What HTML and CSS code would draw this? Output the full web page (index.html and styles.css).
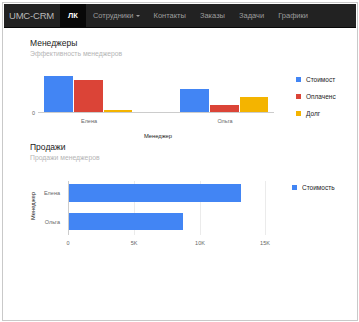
FILE: index.html
```html
<!DOCTYPE html>
<html lang="ru">
<head>
    <meta charset="UTF-8">
    <meta name="viewport" content="width=device-width, initial-scale=1.0">
    <title>UMC-CRM</title>
    <link rel="stylesheet" href="styles.css">
</head>
<body>
    <div class="frame">
        <nav class="navbar">
            <a class="brand">UMC-CRM</a>
            <ul class="nav">
                <li class="nav-item active">ЛК</li>
                <li class="nav-item">Сотрудники<span class="caret"></span></li>
                <li class="nav-item">Контакты</li>
                <li class="nav-item">Заказы</li>
                <li class="nav-item">Задачи</li>
                <li class="nav-item">Графики</li>
            </ul>
        </nav>

        <div class="content">
            <div class="chart-section">
                <div class="chart-title">Менеджеры</div>
                <div class="chart-subtitle">Эффективность менеджеров</div>
                <svg class="chart chart-bars" width="351" height="84" viewBox="0 0 351 84">
                    <!-- Елена -->
                    <rect x="40" y="18" width="29" height="36" fill="#4285f4"/>
                    <rect x="70" y="22" width="29" height="32" fill="#db4437"/>
                    <rect x="100" y="52" width="28" height="2" fill="#f4b400"/>
                    <!-- Ольга -->
                    <rect x="176" y="31" width="29" height="23" fill="#4285f4"/>
                    <rect x="206" y="47" width="29" height="7" fill="#db4437"/>
                    <rect x="236" y="39" width="28" height="15" fill="#f4b400"/>

                    <line x1="34" y1="54.5" x2="270" y2="54.5" stroke="#ccc" stroke-width="1"/>
                    <text class="axis-label" x="31" y="56.5" text-anchor="end">0</text>
                    <text class="axis-label" x="85" y="64.5" text-anchor="middle">Елена</text>
                    <text class="axis-label" x="221" y="64.5" text-anchor="middle">Ольга</text>
                    <text class="axis-title" x="154" y="80" text-anchor="middle">Менеджер</text>

                    <rect x="292" y="19" width="5" height="5" fill="#4285f4"/>
                    <text class="legend" x="302" y="24">Стоимост</text>
                    <rect x="292" y="36" width="5" height="5" fill="#db4437"/>
                    <text class="legend" x="302" y="41">Оплаченс</text>
                    <rect x="292" y="53" width="5" height="5" fill="#f4b400"/>
                    <text class="legend" x="302" y="58">Долг</text>
                </svg>
            </div>

            <div class="chart-section">
                <div class="chart-title">Продажи</div>
                <div class="chart-subtitle">Продажи менеджеров</div>
                <svg class="chart chart-hbars" width="351" height="86" viewBox="0 0 351 86">
                    <line x1="130.5" y1="16" x2="130.5" y2="70" stroke="#ebebeb"/>
                    <line x1="196.5" y1="16" x2="196.5" y2="70" stroke="#ebebeb"/>
                    <line x1="261.5" y1="16" x2="261.5" y2="70" stroke="#ebebeb"/>

                    <rect x="64" y="19" width="173" height="18" fill="#4285f4"/>
                    <rect x="64" y="48" width="115" height="17" fill="#4285f4"/>
                    <line x1="64.5" y1="16" x2="64.5" y2="70" stroke="#ccc"/>

                    <text class="axis-label" x="56" y="30" text-anchor="end">Елена</text>
                    <text class="axis-label" x="56" y="58.5" text-anchor="end">Ольга</text>
                    <text class="axis-title" x="33" y="43" text-anchor="middle" transform="rotate(-90 31 43)">Менеджер</text>

                    <text class="axis-label" x="64" y="80" text-anchor="middle">0</text>
                    <text class="axis-label" x="130" y="80" text-anchor="middle">5K</text>
                    <text class="axis-label" x="196" y="80" text-anchor="middle">10K</text>
                    <text class="axis-label" x="261" y="80" text-anchor="middle">15K</text>

                    <rect x="288" y="20" width="5" height="5" fill="#4285f4"/>
                    <text class="legend" x="298" y="25">Стоимость</text>
                </svg>
            </div>
        </div>
    </div>
</body>
</html>
```

FILE: styles.css
```css
* {
    margin: 0;
    padding: 0;
    box-sizing: border-box;
    font-family: 'Liberation Sans', Arial, sans-serif;
}

body {
    background-color: #fff;
    padding: 2px;
}

.frame {
    width: 356px;
    height: 319px;
    border: 1px solid #c9c9c9;
    padding: 1px;
    background-color: #fff;
}

.navbar {
    display: flex;
    align-items: stretch;
    height: 24px;
    background-color: #222;
    border-bottom: 1px solid #080808;
}

.brand {
    display: flex;
    align-items: center;
    padding: 0 6px 0 5px;
    font-size: 9.5px;
    color: #b8b8b8;
    letter-spacing: -0.2px;
}

.nav {
    display: flex;
    list-style-type: none;
}

.nav-item {
    display: flex;
    align-items: center;
    padding: 0 7px;
    font-size: 7.5px;
    color: #9d9d9d;
}

.nav-item.active {
    background-color: #080808;
    color: #fff;
    font-weight: bold;
    padding: 0 8px;
}

.caret {
    display: inline-block;
    width: 0;
    height: 0;
    margin-left: 2px;
    border-top: 2.5px solid #9d9d9d;
    border-left: 2px solid transparent;
    border-right: 2px solid transparent;
}

.content {
    padding-top: 10px;
}

.chart-section {
    display: flex;
    flex-direction: column;
}

.chart-title {
    padding-left: 26px;
    font-size: 8.5px;
    line-height: 11px;
    color: #222;
}

.chart-subtitle {
    padding-left: 26px;
    font-size: 6.8px;
    line-height: 9px;
    color: #b5b5b5;
}

.chart {
    display: block;
}

.chart-hbars {
    margin-top: 3px;
}

.axis-label {
    font-size: 5.5px;
    fill: #666;
}

.axis-title {
    font-size: 5.8px;
    fill: #222;
}

.legend {
    font-size: 6.5px;
    fill: #222;
}
```
